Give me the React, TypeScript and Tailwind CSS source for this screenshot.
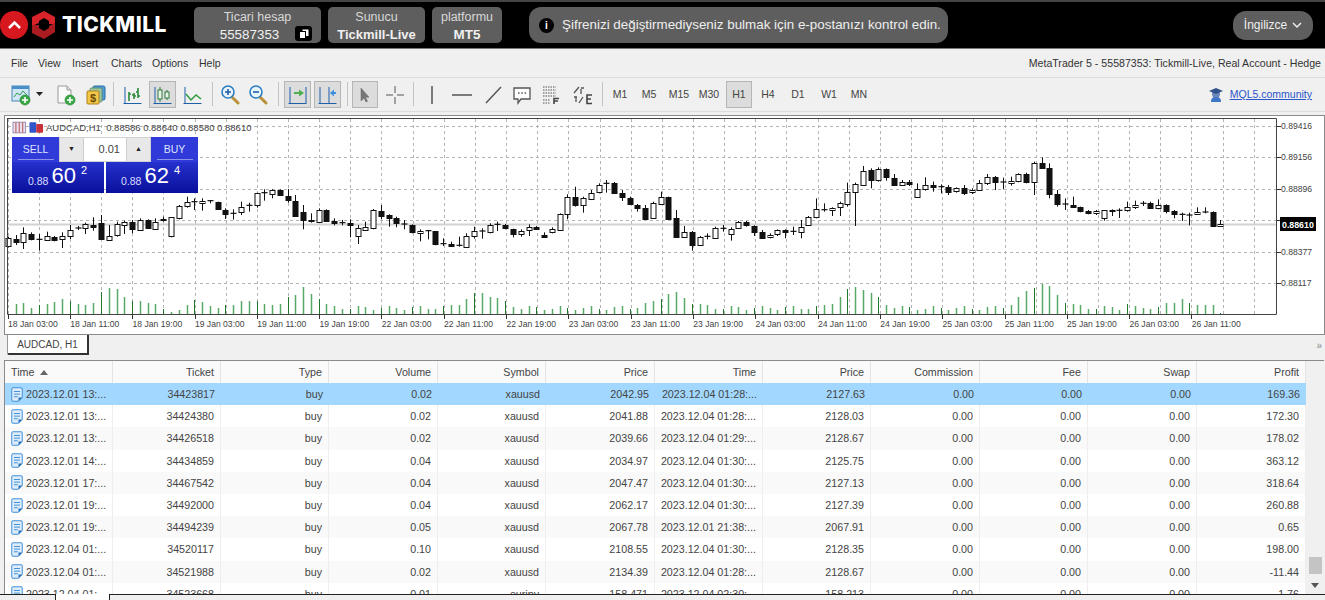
import React from "react";

type C = [number, number, number, number, number];
// top, bottom, high, low, filled (coordinates of the reference chart)
const A: C[] = [
[205,230,200,232,0],[208,218,195,225,1],[190,218,172,237,0],[191,206,187,211,1],[208,210,192,242,1],[197,209,185,212,0],[201,211,198,214,1],[199,209,187,234,0],[179,197,165,207,0],[174,176,168,180,1],[163,175,158,192,0],[165,172,142,182,1],[160,207,135,209,1],[197,209,165,212,0],[163,195,155,200,0],[156,166,152,192,0],[156,178,150,190,1],[149,178,145,182,0],[150,174,148,176,1],[155,175,145,178,0],[147,150,140,155,1],[142,199,142,202,0],[108,145,105,148,0],[95,106,80,113,0],[95,97,85,120,1],[92,97,85,122,0],[92,94,90,100,1],[97,119,95,120,1],[120,133,115,147,1],[130,132,118,149,1],[112,128,95,135,0],[106,108,98,125,1],[70,107,68,113,0],[68,70,58,92,1],[60,72,58,85,0],[60,75,58,77,1],[77,90,57,98,1],[92,136,75,138,1],[125,149,105,178,1],[149,152,130,158,1],[120,155,115,158,0],[120,153,118,155,1],[153,160,145,166,1],[158,160,150,166,1],[160,165,148,202,1],[173,198,165,222,0],[170,180,155,182,0],[120,173,117,178,0],[122,136,105,148,1],[136,145,133,170,1],[145,160,140,172,1],[162,164,150,178,1],[165,187,163,190,1],[182,189,178,214,0],[182,184,180,208,1],[184,223,183,226,1],[221,223,205,228,1],[223,229,215,230,1],[226,228,200,230,1],[197,230,190,232,0],[182,197,170,206,0],[183,185,175,206,1],[164,185,160,190,0],[163,165,155,183,1],[166,174,162,178,1],[178,194,176,202,1],[183,193,178,200,0],[171,180,163,198,0],[171,176,168,180,1],[195,200,187,201,1],[178,186,172,190,0],[132,180,130,182,0],[80,130,73,148,0],[80,104,50,110,1],[85,107,80,128,0],[68,87,60,90,0],[45,67,40,70,0],[40,42,30,68,1],[38,67,36,69,1],[68,80,60,93,1],[83,101,80,103,1],[104,112,102,125,1]];
const B: C[] = [
[175,207,165,207,1],[160,205,155,207,0],[140,162,125,165,0],[140,207,140,207,1],[205,261,180,262,1],[245,260,228,262,0],[245,285,243,302,1],[260,284,258,285,0],[259,261,250,268,1],[233,262,230,265,0],[235,237,225,245,1],[236,251,232,272,0],[216,235,213,236,0],[216,225,213,230,1],[228,245,226,258,1],[245,262,240,267,1],[254,260,250,265,0],[240,252,238,258,0],[240,245,238,265,1],[244,246,230,255,1],[231,247,210,265,0],[201,226,198,228,0],[178,203,145,205,0],[179,181,160,185,1],[175,181,172,198,0],[160,172,155,198,0],[125,162,98,170,0],[102,127,98,228,0],[62,103,48,106,0],[60,90,55,115,1],[58,92,52,95,0],[58,82,55,92,1],[85,106,72,108,1],[97,106,90,108,0],[97,103,90,108,1],[118,142,100,143,0],[105,118,82,122,0],[106,112,95,125,1],[110,112,103,130,1],[111,127,105,135,1],[115,123,112,128,0],[114,128,105,135,1],[120,127,115,132,0],[100,120,90,122,0],[82,100,72,105,0],[82,97,78,120,1],[96,98,83,118,1],[92,98,80,107,0],[73,93,70,97,0],[71,95,68,100,1],[40,97,35,135,0],[40,54,22,56,1],[55,132,40,145,1],[131,162,120,170,1],[162,164,145,180,1],[164,170,140,173,1],[172,185,170,187,1],[184,190,180,193,1],[184,190,180,195,0],[181,206,180,212,0],[181,184,178,198,1],[181,183,175,204,1],[172,182,155,185,0],[166,173,152,177,0],[160,162,153,168,1],[160,175,155,177,1],[164,174,148,178,0],[166,185,163,190,1],[184,194,180,205,1],[193,195,188,213,1],[195,197,188,226,1],[187,193,172,194,0],[186,188,172,190,1],[186,229,184,230,1],[223,229,210,230,0]];

const toA = (v: number) => 170 + v / 3;
const toB = (v: number) => 150 + v / 3;
const candles: C[] = [
  ...A.map((c) => [toA(c[0]), toA(c[1]), toA(c[2]), toA(c[3]), c[4]] as C),
  ...B.map((c) => [toB(c[0]), toB(c[1]), toB(c[2]), toB(c[3]), c[4]] as C),
];
const N = candles.length;
const cx = (i: number) => Math.round(7.76 + (i * (1220.4 - 7.76)) / (N - 1));

// volume heights in px: measured at the ends of the chart, filled by the daily peaks between
const head = [0,10,11,6,9,10,12,15,13,10,9,11,22,26,25,17,13,13,11,10,5,2,4,9,14,12,8,6,9,9,13,13,13,10,9,10,17,19,27,20,15,10];
const tail = [10,8,6,5,7,11,11,15,11,9,9,9,1];
const peaks: [number, number][] = [[482, 15], [672, 14], [857, 21], [1040, 24]];
const vols = candles.map((_, i) => {
  if (i < head.length) return head[i];
  if (i >= N - tail.length) return tail[i - (N - tail.length)];
  const x = cx(i);
  let v = 6 + 2 * Math.sin(i * 1.7);
  for (const [px, a] of peaks) v += a * Math.exp(-((x - px) * (x - px)) / 500);
  return Math.round(v);
});

const labels = ["18 Jan 03:00","18 Jan 11:00","18 Jan 19:00","19 Jan 03:00","19 Jan 11:00","19 Jan 19:00","22 Jan 03:00","22 Jan 11:00","22 Jan 19:00","23 Jan 03:00","23 Jan 11:00","23 Jan 19:00","24 Jan 03:00","24 Jan 11:00","24 Jan 19:00","25 Jan 03:00","25 Jan 11:00","25 Jan 19:00","26 Jan 03:00","26 Jan 11:00"];
const prices: [string, number][] = [["0.89416",126],["0.89156",157],["0.88896",189],["0.88637",220],["0.88377",252],["0.88117",283]];

const columns = ["Time","Ticket","Type","Volume","Symbol","Price","Time","Price","Commission","Fee","Swap","Profit"];
const rows = [
["2023.12.01 13:...","34423817","buy","0.02","xauusd","2042.95","2023.12.04 01:28:...","2127.63","0.00","0.00","0.00","169.36"],
["2023.12.01 13:...","34424380","buy","0.02","xauusd","2041.88","2023.12.04 01:28:...","2128.03","0.00","0.00","0.00","172.30"],
["2023.12.01 13:...","34426518","buy","0.02","xauusd","2039.66","2023.12.04 01:29:...","2128.67","0.00","0.00","0.00","178.02"],
["2023.12.01 14:...","34434859","buy","0.04","xauusd","2034.97","2023.12.04 01:30:...","2125.75","0.00","0.00","0.00","363.12"],
["2023.12.01 17:...","34467542","buy","0.04","xauusd","2047.47","2023.12.04 01:30:...","2127.13","0.00","0.00","0.00","318.64"],
["2023.12.01 19:...","34492000","buy","0.04","xauusd","2062.17","2023.12.04 01:30:...","2127.39","0.00","0.00","0.00","260.88"],
["2023.12.01 19:...","34494239","buy","0.05","xauusd","2067.78","2023.12.01 21:38:...","2067.91","0.00","0.00","0.00","0.65"],
["2023.12.04 01:...","34520117","buy","0.10","xauusd","2108.55","2023.12.04 01:30:...","2128.35","0.00","0.00","0.00","198.00"],
["2023.12.04 01:...","34521988","buy","0.02","xauusd","2134.39","2023.12.04 01:28:...","2128.67","0.00","0.00","0.00","-11.44"],
["2023.12.04 01:...","34523668","buy","0.01","eurjpy","158.471","2023.12.04 02:30:...","158.213","0.00","0.00","0.00","1.76"],
];
const GRID = "grid grid-cols-[108px_108px_108px_109px_108px_109px_108px_108px_109px_108px_109px_109px]";

function Doc() {
  return (
    <svg width="12" height="15" viewBox="0 0 16 20" className="shrink-0">
      <path d="M2.500 1h11A1.500 1.500 0 0 1 15 2.500V14l-5 5H2.500A1.500 1.500 0 0 1 1 17.500v-15A1.500 1.500 0 0 1 2.500 1z" fill="#dcecfb" stroke="#3f8fd6" strokeWidth="1.300" />
      <path d="M4 6h8M4 9.500h8M4 13h5" stroke="#3f8fd6" strokeWidth="1.300" />
      <path d="M10 19v-5h5z" fill="#2a70b8" />
    </svg>
  );
}

function Plus({ x, y, r = 5 }: { x: number; y: number; r?: number }) {
  return (
    <g>
      <circle cx={x} cy={y} r={r} fill="#39a845" stroke="#1f7f2c" strokeWidth=".6" />
      <path d={`M${x - r + 2} ${y}h${2 * r - 4}M${x} ${y - r + 2}v${2 * r - 4}`} stroke="#fff" strokeWidth="1.6" />
    </g>
  );
}

const Ax = () => <path d="M2 3v17M0.500 19.500h18" stroke="#1f5fa8" strokeWidth="1" fill="none" />;

function ToolIcon({ name }: { name: string }) {
  const s = { width: 20, height: 22, viewBox: "0 0 20 22" };
  switch (name) {
    case "newchart":
      return (
        <svg {...s}>
          <rect x="1" y="2" width="17" height="15" fill="#cfe6f7" stroke="#4a86b8" />
          <rect x="1" y="2" width="17" height="3" fill="#4a8fc8" />
          <path d="M3 13l3-4 3 2 3-4 4 4" stroke="#3a9a50" fill="none" />
          <Plus x={14} y={16} />
        </svg>
      );
    case "doc":
      return (
        <svg {...s}>
          <path d="M2 2h9l4 4v13H2z" fill="#fafafa" stroke="#9a9a9a" />
          <path d="M11 2v4h4" fill="#e0e0e0" stroke="#9a9a9a" />
          <Plus x={14} y={16} />
        </svg>
      );
    case "money":
      return (
        <svg {...s}>
          <rect x="7" y="2" width="12" height="14" rx="1.500" fill="#4f9bd9" stroke="#2b6ca6" />
          <rect x="4" y="4" width="12" height="14" rx="1.500" fill="#9cc7a0" stroke="#5f8f68" />
          <rect x="1" y="7" width="12" height="13" rx="1" fill="#f4c748" stroke="#a97f1c" />
          <text x="7" y="18" textAnchor="middle" fontSize="11" fontWeight="700" fill="#6b4b08" fontFamily="'Liberation Sans',sans-serif">$</text>
        </svg>
      );
    case "bars":
      return (
        <svg {...s}>
          <Ax />
          <path d="M6 8v9M6 10h2M11 9v6M9 11h2M11 12h2M15 4v10M13 8h2M15 12h2" stroke="#2c8a3a" strokeWidth="1.600" fill="none" />
        </svg>
      );
    case "candles":
      return (
        <svg {...s}>
          <Ax />
          <path d="M7 3v15M14 6v10" stroke="#2c7a3a" />
          <rect x="5" y="6" width="4" height="9" fill="#e8f4e8" stroke="#2c7a3a" />
          <rect x="12" y="8" width="4" height="6" fill="#e8f4e8" stroke="#2c7a3a" />
        </svg>
      );
    case "line":
      return (
        <svg {...s}>
          <Ax />
          <path d="M3 10l5 6 5-5 5 4" stroke="#2c9a3a" strokeWidth="1.400" fill="none" />
        </svg>
      );
    case "zoomin":
    case "zoomout":
      return (
        <svg {...s}>
          <path d="M12 13l6 6" stroke="#b8913a" strokeWidth="3" strokeLinecap="round" />
          <circle cx="8" cy="8" r="6" fill="#eaf4fb" stroke="#2f7fbe" strokeWidth="1.600" />
          <path d={name === "zoomin" ? "M5 8h6M8 5v6" : "M5 8h6"} stroke="#1f5fa8" strokeWidth="1.600" />
        </svg>
      );
    case "shift":
      return (
        <svg {...s}>
          <Ax />
          <path d="M18 3v16" stroke="#1f5fa8" />
          <path d="M6 8h5V5.500L16 9l-5 3.500V10H6z" fill="#4fb04f" />
        </svg>
      );
    case "scroll":
      return (
        <svg {...s}>
          <Ax />
          <path d="M11 3v16" stroke="#1f5fa8" />
          <path d="M18 8h-2V5.500L12 9l4 3.500V10h2z" fill="#3f8fe0" />
        </svg>
      );
    case "arrow":
      return (
        <svg {...s}>
          <path d="M6 4v13l3-3 2 4 1.500-.8-2-4H14z" fill="#777" stroke="#666" strokeWidth=".5" />
        </svg>
      );
    case "cross":
      return (
        <svg {...s}>
          <path d="M10 2v7M10 13v7M1 11h7M12 11h7" stroke="#555" />
        </svg>
      );
    case "vline":
      return (
        <svg {...s}>
          <path d="M10 2v18" stroke="#555" strokeWidth="1.500" />
        </svg>
      );
    case "hline":
      return (
        <svg {...s}>
          <path d="M0 11h20" stroke="#555" strokeWidth="1.500" />
        </svg>
      );
    case "trend":
      return (
        <svg {...s}>
          <path d="M2 19L17 3" stroke="#555" strokeWidth="1.500" />
        </svg>
      );
    case "comment":
      return (
        <svg {...s}>
          <path d="M2 4h16v11H9l-3 4v-4H2z" fill="#fff" stroke="#555" strokeWidth="1.300" />
          <path d="M6 9h1.500M9.300 9h1.500M12.600 9h1.500" stroke="#555" strokeWidth="1.300" />
        </svg>
      );
    case "fibo":
      return (
        <svg {...s}>
          <path d="M1 3h13M1 6h13M1 9h13M1 12h13" stroke="#555" strokeDasharray="1.500 1" />
          <path d="M1 16h7M1 19h7" stroke="#555" strokeDasharray="1.500 1" />
          <path d="M12 20v-5.500h5M12 17h4" stroke="#444" strokeWidth="1.600" fill="none" />
        </svg>
      );
    case "elliott":
      return (
        <svg {...s}>
          <path d="M1 9l5-6M8 5v5M11 4h-3M3 18v-5M1 13h3M6 19l4-6" stroke="#555" strokeWidth="1.300" fill="none" />
          <path d="M19 11h-5v8.500h5M14 15h4" stroke="#444" strokeWidth="1.600" fill="none" />
        </svg>
      );
  }
  return null;
}

const Sep = ({ ml }: { ml: string }) => <div className={`${ml} mt-[1px] h-[24px] w-px bg-[#c4c4c4]`} />;

function Tool({ name, active, cls }: { name: string; active?: boolean; cls: string }) {
  return (
    <div className={`${cls} flex h-[27px] items-center justify-center ${active ? "border border-[#b5b5b5] bg-[#dcdcdc]" : ""}`}>
      <ToolIcon name={name} />
    </div>
  );
}

function Tf({ t, cls }: { t: string; cls: string }) {
  return <div className={`${cls} flex h-[27px] items-center justify-center text-[10.500px] text-[#444]`}>{t}</div>;
}

function InfoBox({ label, value, w, bold, vcls = "", children }: { label: string; value: string; w: string; bold?: boolean; vcls?: string; children?: React.ReactNode }) {
  return (
    <div className={`${w} relative flex h-[36px] flex-col items-center justify-center rounded-[5px] bg-[#5e5e5e] pt-[2px] text-center leading-[17px]`}>
      <div className="text-[12.500px] text-[#d8d8d8]">{label}</div>
      <div className={`${vcls} text-[13.400px] text-[#f0f0f0] ${bold ? "font-bold" : ""}`}>{value}</div>
      {children}
    </div>
  );
}

function Chart() {
  const vgrid = Array.from({ length: 41 }, (_, i) => Math.round(7.7 + 31.15 * i) + 0.5);
  return (
    <svg width="1318" height="218" viewBox="5 116 1318 218" className="block" fontFamily="'Liberation Sans',sans-serif">
      {vgrid.map((x) => (x > 8 && x < 1276 ? <path key={x} d={`M${x} 119V314`} stroke="#b4b4b4" strokeDasharray="3 3" /> : null))}
      {prices.map(([, y]) => <path key={y} d={`M8 ${y + 0.5}H1276`} stroke="#b4b4b4" strokeDasharray="3 3" />)}
      <path d="M8 224.500H1277" stroke="#d2d2d2" strokeWidth="2" />
      {candles.map((c, i) => {
        const x = cx(i) + 0.5;
        const thin = c[1] - c[0] < 1;
        return (
          <g key={i}>
            <path d={`M${x} ${c[2]}V${c[3]}`} stroke="#111" />
            {thin ? (
              <path d={`M${x - 3} ${c[0]}h6`} stroke="#111" strokeWidth="1.200" />
            ) : (
              <rect x={x - 2.500} y={Math.round(c[0]) + 0.5} width="5" height={Math.max(1, Math.round(c[1] - c[0]))} fill={c[4] ? "#111" : "#fff"} stroke="#111" />
            )}
          </g>
        );
      })}
      {vols.map((h, i) =>
        h > 0 ? (
          <path
            key={i}
            d={`M${cx(i) + 0.5} 314v${-h}`}
            stroke={i % 4 === 0 ? "#1e7a2a" : "#5aa865"}
            strokeWidth={i % 4 === 0 ? 1 : 1.500}
          />
        ) : null
      )}
      <path d="M7.500 118V314.500H1276.500V118.500H7" fill="none" stroke="#444" />
      {labels.map((l, i) => (
        <g key={l}>
          <path d={`M${Math.round(7.7 + 62.3 * i) + 0.5} 314v5`} stroke="#333" />
          <text x={8 + 62.3 * i} y="327" fontSize="8.600" fill="#444">{l}</text>
        </g>
      ))}
      {prices.map(([p, y]) => (
        <g key={p}>
          <path d={`M1277 ${y + 0.5}h4`} stroke="#333" />
          <text x="1281" y={y + 3} fontSize="8.600" fill="#444">{p}</text>
        </g>
      ))}
      <rect x="1280" y="217" width="36" height="14" fill="#000" />
      <text x="1282" y="227.500" fontSize="8.800" fontWeight="700" fill="#fff">0.88610</text>
    </svg>
  );
}

function TradePanel() {
  return (
    <div className="absolute left-[7px] top-[21px] w-[186px] text-white">
      <div className="flex h-[25px]">
        <div className="flex w-[47px] flex-col items-center bg-[#2f3ad8]">
          <div className="mt-[5px] text-[10.500px] leading-[14px] text-[#dfe3ff]">SELL</div>
          <div className="mt-[3px] h-px w-[36px] bg-[#8d94e8]" />
        </div>
        <div className="flex w-[92px] border border-[#d0d0d0] bg-white">
          <div className="flex w-[24px] items-center justify-center border-r border-[#cfcfcf] bg-[#e8e8e8] text-[7px] text-[#222]">▼</div>
          <div className="flex flex-1 items-center justify-end pr-[6px] text-[11px] text-[#444]">0.01</div>
          <div className="flex w-[24px] items-center justify-center border-l border-[#cfcfcf] bg-[#e8e8e8] text-[7px] text-[#222]">▲</div>
        </div>
        <div className="flex w-[47px] flex-col items-center bg-[#2f3ad8]">
          <div className="mt-[5px] text-[10.500px] leading-[14px] text-[#dfe3ff]">BUY</div>
          <div className="mt-[3px] h-px w-[36px] bg-[#8d94e8]" />
        </div>
      </div>
      <div className="flex h-[31px] gap-[2px]">
        {[["60", "2", "pl-[16px]"], ["62", "4", "pl-[15px]"]].map(([a, b, pl]) => (
          <div key={a} className={`${pl} flex h-full w-[92px] items-start bg-gradient-to-b from-[#2630cc] to-[#0a0e9c]`}>
            <span className="mt-[12px] text-[10.500px] leading-[14px] text-[#d8dcff]">0.88</span>
            <span className="ml-[3px] mt-[1px] text-[22px] leading-[26px]">{a}</span>
            <span className="ml-[5px] mt-[2px] text-[11px] leading-[13px]">{b}</span>
          </div>
        ))}
      </div>
    </div>
  );
}

export default function App() {
  return (
    <div className="h-[600px] w-[1325px] overflow-hidden bg-[#f0f0f0] font-['Liberation_Sans',Arial,sans-serif] text-[10.700px]">
      {/* site header */}
      <header className="flex h-[49px] items-center border-t-2 border-b border-t-[#444] border-b-[#777] bg-black">
        <svg width="170" height="34" viewBox="0 0 170 34" className="shrink-0">
          <circle cx="14" cy="17" r="14" fill="#d8181f" />
          <path d="M9 20l5.500-5.500L20 20" stroke="#fff" strokeWidth="2.500" fill="none" />
          <path d="M44 3l11 6v7h-6v-3l-5-3-5 3v2l-7 3V9z" fill="#d8232a" />
          <path d="M44 31l-12-6v-8h7v3l5 3 5-3v-2l6-3v9z" fill="#a81c22" />
        </svg>
        <div className="ml-[-108px] w-[106px] shrink-0 font-['Inter',sans-serif] text-[21px] font-extrabold leading-[24px] tracking-[0.5px] text-white">TICKMILL</div>
        <div className="ml-[26px] flex gap-[7px]">
          <InfoBox label="Ticari hesap" value="55587353" w="w-[127px]" vcls="pr-[16px]">
            <div className="absolute left-[101px] top-[19px] flex h-[15px] w-[17px] items-center justify-center rounded-[3px] bg-black">
              <svg width="10" height="10" viewBox="0 0 10 10">
                <rect x="3.500" y="0.500" width="6" height="6.500" fill="#fff" />
                <rect x="0.500" y="2.500" width="6" height="7" fill="#fff" stroke="#000" />
              </svg>
            </div>
          </InfoBox>
          <InfoBox label="Sunucu" value="Tickmill-Live" w="w-[97px]" bold vcls="text-[13px]" />
          <InfoBox label="platformu" value="MT5" w="w-[70px]" bold />
        </div>
        <div className="ml-[27px] flex h-[36px] w-[419px] items-center whitespace-nowrap rounded-[12px] bg-[#5e5e5e] pl-[10px] text-[13.400px] text-[#eeeeee]">
          <span className="flex h-[15px] w-[15px] items-center justify-center rounded-full bg-black text-[10px] font-bold text-white">i</span>
          <span className="ml-[8px]">Şifrenizi değiştirmediyseniz bulmak için e-postanızı kontrol edin.</span>
        </div>
        <div className="ml-[285px] flex h-[29px] w-[80px] items-center justify-center gap-[5px] rounded-[13px] bg-[#5e5e5e] text-[12px] text-[#eeeeee]">
          İngilizce
          <svg width="10" height="7" viewBox="0 0 10 7"><path d="M1 1l4 4 4-4" stroke="#eee" strokeWidth="1.500" fill="none" /></svg>
        </div>
      </header>

      {/* menu bar */}
      <div className="flex h-[28px] items-center pl-[11px] pr-[4px] pt-[2px] text-[10.500px] text-[#333]">
        <span className="w-[27px]">File</span>
        <span className="w-[34px]">View</span>
        <span className="w-[39px]">Insert</span>
        <span className="w-[41px]">Charts</span>
        <span className="w-[47px]">Options</span>
        <span>Help</span>
        <span className="ml-auto text-[10.600px]">MetaTrader 5 - 55587353: Tickmill-Live, Real Account - Hedge</span>
      </div>

      {/* toolbar */}
      <div className="mb-[3px] flex h-[35px] items-start border-y border-[#dcdcdc] pt-[3px] pr-[13px]">
        <Tool name="newchart" cls="ml-[11px] w-[20px]" />
        <svg width="8" height="5" viewBox="0 0 8 5" className="ml-[5px] mt-[11px]"><path d="M0 0h7L3.500 4z" fill="#222" /></svg>
        <Tool name="doc" cls="ml-[12px] w-[20px]" />
        <Tool name="money" cls="ml-[10px] w-[20px]" />
        <Sep ml="ml-[7px]" />
        <Tool name="bars" cls="ml-[9px] w-[20px]" />
        <Tool name="candles" active cls="ml-[6px] w-[27px]" />
        <Tool name="line" cls="ml-[7px] w-[20px]" />
        <Sep ml="ml-[9px]" />
        <Tool name="zoomin" cls="ml-[7px] w-[20px]" />
        <Tool name="zoomout" cls="ml-[8px] w-[20px]" />
        <Sep ml="ml-[10px]" />
        <Tool name="shift" active cls="ml-[5px] w-[27px]" />
        <Tool name="scroll" active cls="ml-[3px] w-[27px]" />
        <Sep ml="ml-[6px]" />
        <Tool name="arrow" active cls="ml-[4px] w-[26px]" />
        <Tool name="cross" cls="ml-[7px] w-[20px]" />
        <Sep ml="ml-[8px]" />
        <Tool name="vline" cls="ml-[8px] w-[20px]" />
        <Tool name="hline" cls="ml-[10px] w-[20px]" />
        <Tool name="trend" cls="ml-[12px] w-[20px]" />
        <Tool name="comment" cls="ml-[8px] w-[20px]" />
        <Tool name="fibo" cls="ml-[10px] w-[20px]" />
        <Tool name="elliott" cls="ml-[11px] w-[20px]" />
        <Sep ml="ml-[9px]" />
        <Tf t="M1" cls="ml-[6px] w-[22px]" />
        <Tf t="M5" cls="ml-[7px] w-[22px]" />
        <Tf t="M15" cls="ml-[7px] w-[24px]" />
        <Tf t="M30" cls="ml-[6px] w-[24px]" />
        <div className="ml-[5px] flex h-[27px] w-[26px] items-center justify-center border border-[#b5b5b5] bg-[#dcdcdc] text-[10.500px] text-[#444]">H1</div>
        <Tf t="H4" cls="ml-[5px] w-[22px]" />
        <Tf t="D1" cls="ml-[8px] w-[22px]" />
        <Tf t="W1" cls="ml-[9px] w-[22px]" />
        <Tf t="MN" cls="ml-[8px] w-[22px]" />
        <div className="ml-auto mt-[6px] flex items-center gap-[5px]">
          <svg width="17" height="16" viewBox="0 0 17 16">
            <circle cx="8" cy="7" r="4" fill="#6a88b8" />
            <path d="M1 4l7-3 7 3-7 3z" fill="#33518a" />
            <path d="M3 15c0-4 2-5 5-5s5 1 5 5z" fill="#3f74c8" />
          </svg>
          <span className="text-[10.500px] text-[#2a55c8] underline">MQL5.community</span>
        </div>
      </div>

      {/* chart */}
      <div className="relative ml-[4px] h-[220px] w-[1321px] overflow-hidden border border-[#8a8a8a] bg-white">
        <Chart />
        <div className="absolute left-[7px] top-[5px] flex items-center">
          <svg width="33" height="13" viewBox="0 0 34 13">
            <rect x="1" y="1" width="13" height="11" fill="#e8dff0" stroke="#9a8db0" />
            <path d="M4 1v11M7.500 1v11M11 1v11" stroke="#c06a6a" strokeWidth="1.200" />
            <rect x="18" y="1" width="7" height="11" rx="1" fill="#2f55c8" />
            <rect x="25" y="3" width="7" height="9" rx="1" fill="#c8323a" />
          </svg>
          <span className="ml-[1px] text-[9.500px] leading-[12px] text-[#444]">AUDCAD,H1&nbsp;&nbsp;0.88586 0.88640 0.88580 0.88610</span>
        </div>
        <TradePanel />
      </div>

      {/* tabs */}
      <div className="relative h-[25px]">
        <div className="ml-[7px] flex h-[20px] w-[82px] items-center justify-center rounded-bl-[2px] border-r-2 border-b-2 border-l border-r-[#333] border-b-[#333] border-l-[#999] bg-white text-[10px] text-[#444]">AUDCAD, H1</div>
        <div className="absolute right-[3px] top-[5px] text-[10px] leading-[12px] text-[#888]">»</div>
      </div>

      {/* terminal table */}
      <div className="relative ml-[4px] flex h-[234px] w-[1320px] overflow-hidden border-l border-t border-[#8a8a8a] bg-white text-[#444]">
        <div className="w-[1301px]">
          <div className={`${GRID} h-[22px] items-center bg-[#fafafa] text-[#444]`}>
            {columns.map((c, i) => (
              <div key={i} className={`flex h-full items-center border-r border-[#e4e4e4] ${i === 0 ? "pl-[6px]" : "justify-end pr-[6px]"}`}>
                {c}
                {i === 0 && <svg width="8" height="5" viewBox="0 0 8 5" className="ml-[6px]"><path d="M0 5h8L4 0z" fill="#666" /></svg>}
              </div>
            ))}
          </div>
          {rows.map((r, ri) => (
            <div key={ri} className={`${GRID} h-[22.200px] items-center ${ri === 0 ? "bg-[#a2d8ff]" : ri % 2 ? "bg-white" : "bg-[#f9f9f9]"}`}>
              {r.map((v, i) => (
                <div key={i} className={`flex h-full items-center whitespace-nowrap ${ri === 0 ? "" : "border-r border-[#eeeeee]"} ${i === 0 ? "pl-[6px]" : "justify-end pr-[6px]"}`}>
                  {i === 0 && <span className="mr-[3px] flex"><Doc /></span>}
                  {v}
                </div>
              ))}
            </div>
          ))}
        </div>
        <div className="flex w-[18px] flex-col items-center bg-[#f0f0f0]">
          <div className="mt-[196px] h-[17px] w-[13px] bg-[#c4c4c4]" />
          <svg width="8" height="5" viewBox="0 0 8 5" className="mt-[9px]"><path d="M0 0h8L4 5z" fill="#555" /></svg>
        </div>
      </div>

      {/* bottom strip */}
      <div className="flex h-[6px]">
        <div className="h-[1px] w-[55px] bg-[#222]" />
        <div className="h-full w-[55px] border-l border-r border-[#222] bg-white" />
        <div className="h-[1px] flex-1 bg-[#222]" />
      </div>
    </div>
  );
}
